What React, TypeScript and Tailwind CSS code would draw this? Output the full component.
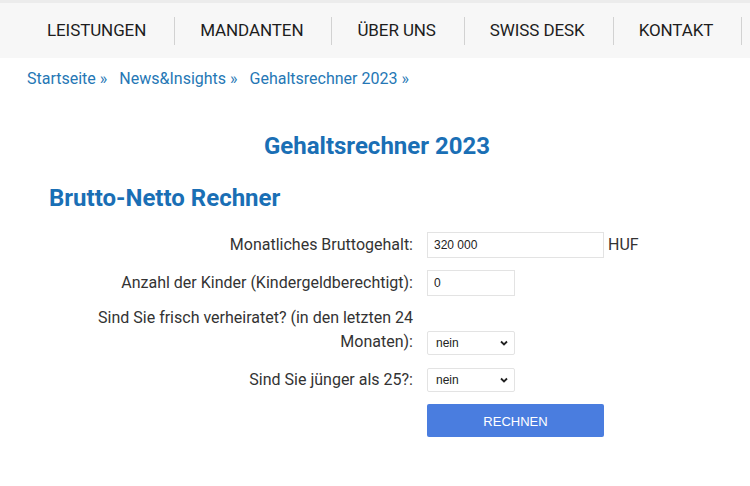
import React from "react";

const navItems = ["LEISTUNGEN", "MANDANTEN", "ÜBER UNS", "SWISS DESK", "KONTAKT"];

function Chevron() {
  return (
    <svg width="10" height="10" viewBox="0 0 10 10" className="absolute right-[5px] top-1/2 -translate-y-1/2">
      <path d="M2 3.5 L5 6.5 L8 3.5" fill="none" stroke="#222" strokeWidth="1.8" />
    </svg>
  );
}

function Select() {
  return (
    <div className="relative w-[88px] h-[24px] border border-[#e3e3e3] bg-white rounded-[2px] text-[12px] text-[#222] flex items-center pl-[8px]" style={{ fontFamily: "Arial, 'Liberation Sans', sans-serif" }}>
      nein
      <Chevron />
    </div>
  );
}

export default function App() {
  return (
    <div className="w-[750px] h-[486px] bg-white overflow-hidden" style={{ fontFamily: "Roboto, 'Liberation Sans', sans-serif" }}>
      <div className="border-t-[3px] border-[#ececec] bg-[#f7f7f7] h-[58px] flex items-center pl-[22px] overflow-hidden">
        {navItems.map((n) => (
          <div key={n} className="shrink-0 whitespace-nowrap h-[28px] flex items-center pl-[25px] pr-[28px] border-r border-[#d2d2d2] text-[17px] tracking-[-0.1px] text-[#1d1d1d]">
            {n}
          </div>
        ))}
      </div>
      <div className="pl-[27px] pt-[9px] flex gap-[12px] text-[16px] text-[#2577b5]">
        <span>Startseite »</span>
        <span>News&amp;Insights »</span>
        <span>Gehaltsrechner 2023 »</span>
      </div>
      <h1 className="text-center text-[24px] font-bold text-[#1a6fb5] mt-[39px] leading-[32px] pl-[4px]">Gehaltsrechner 2023</h1>
      <h2 className="pl-[49px] text-[24px] font-bold text-[#1a6fb5] mt-[20px] leading-[32px]">Brutto-Netto Rechner</h2>
      <div className="mt-[18px] grid grid-cols-[320px_auto] gap-x-[14px] pl-[93px] text-[16px] text-[#333] leading-[24px]">
        <div className="text-right h-[26px] flex items-center justify-end">Monatliches Bruttogehalt:</div>
        <div className="flex items-center gap-[4px]">
          <div className="w-[177px] h-[26px] border border-[#e3e3e3] bg-white flex items-center pl-[6px] text-[12px] text-[#222]" style={{ fontFamily: "Arial, 'Liberation Sans', sans-serif" }}>320 000</div>
          <span>HUF</span>
        </div>
        <div className="text-right h-[26px] flex items-center justify-end mt-[12px]">Anzahl der Kinder (Kindergeldberechtigt):</div>
        <div className="mt-[12px]">
          <div className="w-[88px] h-[26px] border border-[#e3e3e3] bg-white flex items-center pl-[6px] text-[12px] text-[#222]" style={{ fontFamily: "Arial, 'Liberation Sans', sans-serif" }}>0</div>
        </div>
        <div className="text-right mt-[10px] pb-[1px]">Sind Sie frisch verheiratet? (in den letzten 24 Monaten):</div>
        <div className="mt-[10px] flex items-end">
          <Select />
        </div>
        <div className="text-right h-[24px] flex items-center justify-end mt-[13px]">Sind Sie jünger als 25?:</div>
        <div className="mt-[13px]">
          <Select />
        </div>
        <div />
        <div className="mt-[12px]">
          <div className="w-[177px] h-[33px] bg-[#4a7ddf] rounded-[2px] flex items-center justify-center pt-[3px] text-[13px] text-white" style={{ fontFamily: "Arial, 'Liberation Sans', sans-serif" }}>RECHNEN</div>
        </div>
      </div>
    </div>
  );
}
